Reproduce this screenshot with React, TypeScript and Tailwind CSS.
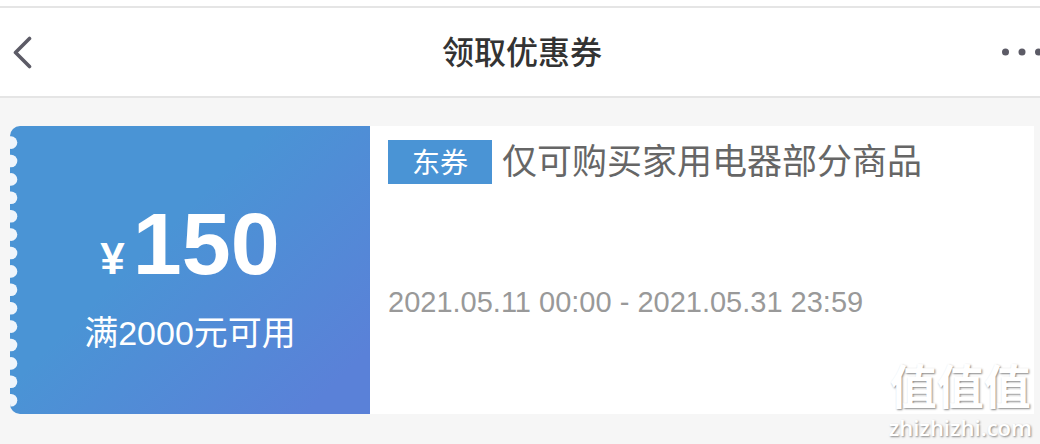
const notches = Array.from({ length: 15 }, (_, i) => 16.6 + i * 18.4);

function CouponValue() {
  return (
    <section className="relative flex w-[360px] shrink-0 flex-col items-center overflow-hidden rounded-l-[10px] bg-[linear-gradient(135deg,#4a94d5_0%,#4a94d5_40%,#5a81d8_90%,#5a81d8_100%)] pt-[74px] text-white">
      <svg className="absolute left-0 top-0 h-[288px] w-3" viewBox="0 0 12 288" aria-hidden="true">
        {notches.map((y) => (
          <circle key={y} cx="1" cy={y} r="6.3" fill="#eff5fb" />
        ))}
      </svg>
      <p className="flex items-baseline gap-2 font-bold leading-[88px]">
        <span className="text-[44px]">¥</span>
        <span className="text-[88px]">150</span>
      </p>
      <p className="mt-1 text-[34px] leading-[52px]">满2000元可用</p>
    </section>
  );
}

function Watermark() {
  return (
    <div className="absolute right-2 bottom-1 flex flex-col items-center text-white [text-shadow:1px_1px_2px_#888]" aria-hidden="true">
      <span className="text-[47px] font-bold leading-[52px]">值值值</span>
      <span className="font-['Open_Sans',sans-serif] text-[22px] font-semibold leading-[26px]">zhizhizhi.com</span>
    </div>
  );
}

export default function App() {
  return (
    <div className="relative min-h-screen overflow-hidden bg-[#f6f6f6] font-['Liberation_Sans','Noto_Sans_CJK_SC',sans-serif]">
      <div className="h-1.5 bg-white" />
      <header className="flex h-[92px] items-center justify-between border-y-2 border-[#e5e5e5] bg-white">
        <button type="button" aria-label="返回" className="flex w-14 pl-3">
          <svg width="22" height="34" viewBox="0 0 22 34" fill="none" stroke="#5c5b66" strokeWidth="3.6" strokeLinecap="round" strokeLinejoin="round" aria-hidden="true">
            <path d="M17.5 3.5 3.5 17.5 17.5 31.5" />
          </svg>
        </button>
        <h1 className="pt-0.5 pl-1 text-[32px] font-medium text-[#333]">领取优惠券</h1>
        <button type="button" aria-label="更多" className="flex w-14 justify-end">
          <svg width="40" height="8" viewBox="0 0 40 8" fill="#5c5b66" aria-hidden="true">
            <circle cx="5.5" cy="4" r="3.5" />
            <circle cx="22" cy="4" r="3.5" />
            <circle cx="38.5" cy="4" r="3.5" />
          </svg>
        </button>
      </header>
      <main className="pt-7 pr-1.5 pb-[30px] pl-2.5">
        <article className="flex min-h-72 bg-[linear-gradient(90deg,transparent_20px,white_20px)]">
          <CouponValue />
          <section className="grow pt-3.5 pl-[18px]">
            <div className="flex items-center gap-2.5">
              <span className="flex h-11 w-[104px] items-center justify-center bg-[#4a94d5] pt-1 text-[28px] text-white">东券</span>
              <h2 className="text-[35px] leading-[44px] text-[#666]">仅可购买家用电器部分商品</h2>
            </div>
            <p className="mt-[98px] text-[29px] leading-10 text-[#999]">
              <time dateTime="2021-05-11T00:00">2021.05.11 00:00</time> - <time dateTime="2021-05-31T23:59">2021.05.31 23:59</time>
            </p>
          </section>
        </article>
      </main>
      <Watermark />
    </div>
  );
}
